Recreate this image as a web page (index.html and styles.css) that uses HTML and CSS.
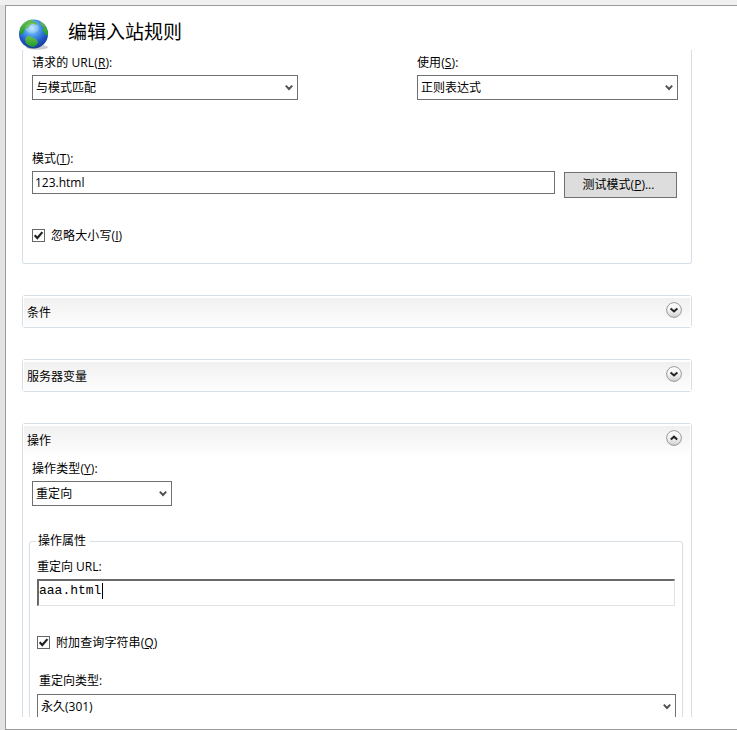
FILE: index.html
```html
<!DOCTYPE html>
<html lang="zh-CN">
<head>
<meta charset="utf-8">
<title>编辑入站规则</title>
<link rel="stylesheet" href="styles.css">
</head>
<body>
<svg class="defs" width="0" height="0">
  <defs>
    <linearGradient id="knob" x1="0" y1="0" x2="0" y2="1">
      <stop offset="0" stop-color="#fff"/><stop offset=".5" stop-color="#f2f2f2"/><stop offset="1" stop-color="#cfcfcf"/>
    </linearGradient>
    <symbol id="arrow" viewBox="0 0 8 7"><path d="M.8 1.6 4 5 7.2 1.6" fill="none" stroke="#505050" stroke-width="1.9"/></symbol>
    <symbol id="check" viewBox="0 0 13 13"><rect x=".5" y=".5" width="12" height="12" fill="#fff" stroke="#666"/><path d="M2.7 6.2 5.3 9 10.4 3.1" fill="none" stroke="#222" stroke-width="2.2"/></symbol>
    <symbol id="expand" viewBox="0 0 16 16"><circle cx="8" cy="8" r="7.4" fill="url(#knob)" stroke="#999"/><path d="M4.6 6.4 8 9.4 11.4 6.4" fill="none" stroke="#222" stroke-width="2"/></symbol>
    <symbol id="collapse" viewBox="0 0 16 16"><circle cx="8" cy="8" r="7.4" fill="url(#knob)" stroke="#999"/><path d="M4.8 9.6 8 6.7 11.2 9.6" fill="none" stroke="#222" stroke-width="2"/></symbol>
  </defs>
</svg>
<main class="window">
  <header class="header">
    <svg class="globe" viewBox="0 0 32 32">
      <defs>
        <radialGradient id="sea" cx=".45" cy=".3" r=".72">
          <stop offset="0" stop-color="#b5e4ff"/><stop offset=".35" stop-color="#4f9fec"/><stop offset=".7" stop-color="#2159c8"/><stop offset="1" stop-color="#173a91"/>
        </radialGradient>
        <linearGradient id="land" x1="0" y1="0" x2="0" y2="1">
          <stop offset="0" stop-color="#6cc04a"/><stop offset="1" stop-color="#1d9a2c"/>
        </linearGradient>
        <clipPath id="ball"><circle cx="14.5" cy="15" r="14.5"/></clipPath>
      </defs>
      <ellipse cx="18" cy="28.3" rx="11" ry="2.5" fill="#aaa" opacity=".6"/>
      <circle cx="14.5" cy="15" r="14.5" fill="url(#sea)"/>
      <g clip-path="url(#ball)" fill="url(#land)">
        <path d="M1 14 1 8 5 3 11 0 15 1 13 3 17 3 18 6 14 5 11 6 9 9 6 10 5 13 2 16Z"/>
        <path d="M21 2 26 4 29 10 29 16 26 16 25 13 23 11 25 9 22 6Z"/>
        <path d="M6 20 9 17 13 18 18 21 19 24 15 28 10 27 7 24Z"/>
      </g>
      <ellipse cx="13" cy="9" rx="7" ry="5" fill="#fff" opacity=".2"/>
    </svg>
    <h1>编辑入站规则</h1>
  </header>
  <div class="viewport">
    <section class="group match">
      <div class="columns">
        <div class="field"><label>请求的 URL(<u>R</u>):</label>
          <div class="select request"><span>与模式匹配</span><svg><use href="#arrow"/></svg></div></div>
        <div class="field"><label>使用(<u>S</u>):</label>
          <div class="select using"><span>正则表达式</span><svg><use href="#arrow"/></svg></div></div>
      </div>
      <label class="pattern-label">模式(<u>T</u>):</label>
      <div class="pattern-row"><div class="input">123.html</div><div class="button">测试模式(<u>P</u>)...</div></div>
      <div class="checkbox case"><svg><use href="#check"/></svg><span>忽略大小写(<u>I</u>)</span></div>
    </section>
    <section class="group closed"><div class="bar"><h2>条件</h2><svg><use href="#expand"/></svg></div></section>
    <section class="group closed"><div class="bar"><h2>服务器变量</h2><svg><use href="#expand"/></svg></div></section>
    <section class="group action">
      <div class="bar"><h2>操作</h2><svg><use href="#collapse"/></svg></div>
      <div class="type"><label>操作类型(<u>Y</u>):</label>
        <div class="select"><span>重定向</span><svg><use href="#arrow"/></svg></div></div>
      <fieldset>
        <legend>操作属性</legend>
        <label>重定向 URL:</label>
        <div class="textarea"><span>aaa.html</span><i class="caret"></i></div>
        <div class="checkbox append"><svg><use href="#check"/></svg><span>附加查询字符串(<u>Q</u>)</span></div>
        <label class="redirect-label">重定向类型:</label>
        <div class="select"><span>永久(301)</span><svg><use href="#arrow"/></svg></div>
      </fieldset>
    </section>
  </div>
</main>
</body>
</html>
```
FILE: styles.css
```css
* { box-sizing: border-box; }
body {
  margin: 0;
  height: 730px;
  padding: 5px 0 0 5px;
  overflow: hidden;
  background: linear-gradient(#f0f0f0 5px, #e3e3e3 5px);
  color: #000;
  font: 12px/16px "Open Sans", "Noto Sans CJK SC", sans-serif;
}
.defs { position: absolute; }
.window {
  height: 725px;
  border: 1px solid #999;
  border-right: 0;
  background: #fff;
}
.header { display: flex; height: 44px; padding-left: 13px; }
.globe { width: 32px; height: 32px; margin-top: 13px; }
h1 {
  margin: 11px 0 0 17px;
  font-size: 19px;
  line-height: 30px;
  font-weight: 400;
}
.viewport { height: 667px; padding-left: 16px; overflow: hidden; }
.group {
  width: 670px;
  border: 1px solid #d5dfe5;
  border-radius: 3px;
}
label { display: block; white-space: nowrap; }
u { text-underline-offset: 1px; }
.match {
  height: 214px;
  border-top: 0;
  border-radius: 0 0 3px 3px;
  padding: 5px 0 0 9px;
}
.columns { display: flex; gap: 119px; }
.field label { letter-spacing: .1px; }
.select {
  display: flex;
  align-items: center;
  justify-content: space-between;
  height: 25px;
  margin-top: 4px;
  padding: 0 4px 0 3px;
  border: 1px solid #707070;
  background: #fff;
}
.select svg { width: 8px; height: 7px; }
.request { width: 266px; }
.using { width: 261px; }
.pattern-label { margin-top: 51px; letter-spacing: .1px; }
.pattern-row { display: flex; gap: 9px; margin-top: 4px; }
.input {
  width: 523px;
  height: 23px;
  padding: 3px 2px;
  border: 1px solid #707070;
  line-height: 16px;
}
.button {
  width: 113px;
  height: 26px;
  margin-top: 1px;
  border: 1px solid #707070;
  background: #ddd;
  line-height: 24px;
  text-align: center;
  padding-right: 4px;
}
.checkbox { display: flex; align-items: flex-start; gap: 6px; height: 16px; letter-spacing: .1px; }
.checkbox svg { width: 13px; height: 13px; margin-top: 1px; }
.case { margin-top: 30px; }
.closed { height: 33px; margin-top: 31px; }
.bar {
  display: flex;
  justify-content: space-between;
  height: 31px;
  padding: 0 9px 0 4px;
  border: 2px solid #fff;
  border-width: 2px 1px 0;
  background: linear-gradient(#f0f0f0, #fefefe);
}
.bar h2 { margin: 7px 0 0 -1px; font-size: 12px; line-height: 16px; font-weight: 400; }
.bar svg { width: 16px; height: 16px; margin-top: 4px; margin-right: -1px; }
.action { height: 400px; margin-top: 31px; }
.type { width: 149px; padding: 6px 0 0 9px; letter-spacing: .1px; }
fieldset {
  min-width: 0;
  width: 654px;
  height: 300px;
  margin: 27px 0 0 6px;
  padding: 10px 6px 0 7px;
  border: 1px solid #d5dfe5;
  border-radius: 3px;
}
legend { padding: 0 4px 0 2px; margin-left: -1px; }
.textarea {
  display: flex;
  width: 638px;
  height: 27px;
  margin-top: 4px;
  padding: 2px 0 0;
  border: 1px solid #e3e3e3;
  border-top: 2px solid #696969;
  border-left: 2px solid #696969;
  font: 13px/16px "Liberation Mono", monospace;
}
.caret { width: 1px; height: 16px; margin-left: 1px; background: #000; }
.append { margin-top: 29px; }
.redirect-label { margin: 22px 0 0 2px; }
.redirect-label + .select { margin-top: 5px; width: 639px; }
```
